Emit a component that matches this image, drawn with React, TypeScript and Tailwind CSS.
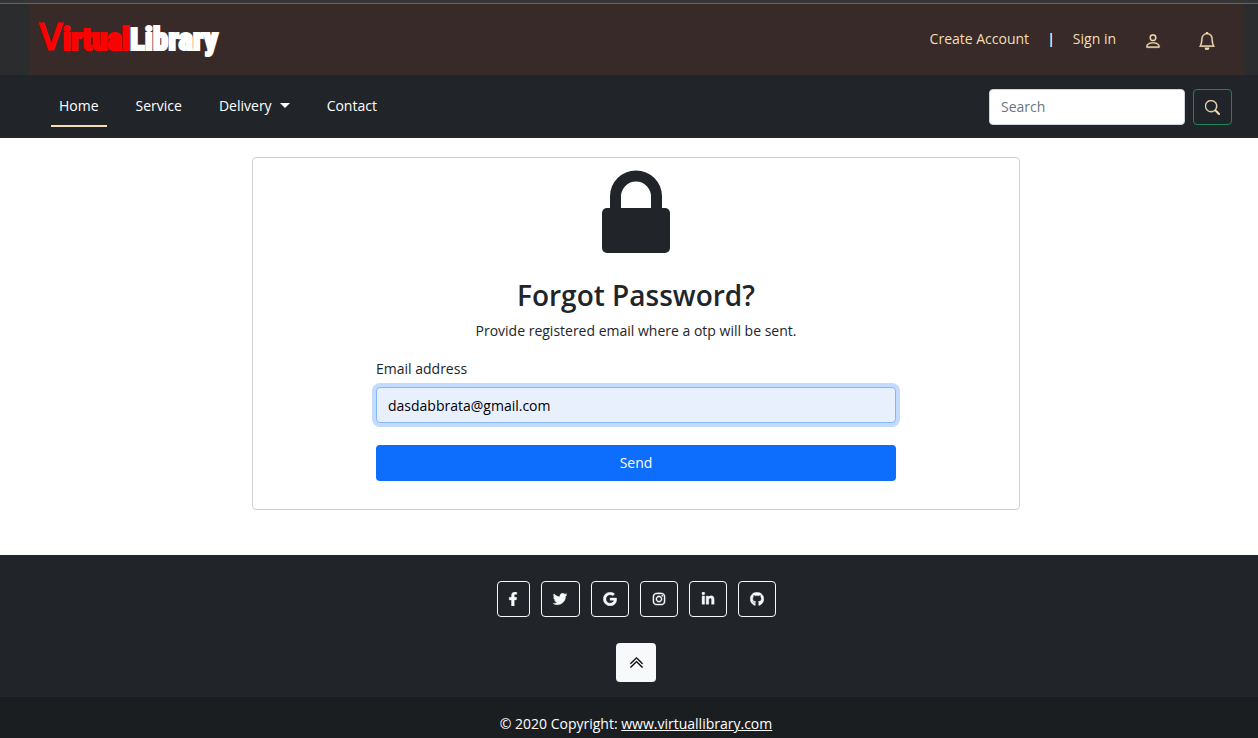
import { useState } from "react";
import type { ReactNode } from "react";
import { BsBell, BsChevronDoubleUp, BsPerson, BsSearch } from "react-icons/bs";
import { FaFacebookF, FaGithub, FaGoogle, FaInstagram, FaLinkedinIn, FaTwitter } from "react-icons/fa";

function TopBar() {
  return (
    <div className="border-t-[3px] border-[#353535]">
      <div className="border-t border-[#6a6764] bg-[#2a2c2d] pr-3.5 pl-[29px]">
        <div className="flex h-[71px] items-center justify-between bg-[#382a29] pr-7 pb-0.5 pl-2.5">
          <a href="#" className="flex items-baseline pb-0.5 font-['Roboto_Condensed',Roboto,sans-serif] text-[31px] leading-10 font-black">
            <span className="font-['Open_Sans',sans-serif] text-[38px] font-semibold text-[#ff0000] [-webkit-text-stroke:1px_#ff0000]">V</span>
            <span className="text-[#ff0000] [-webkit-text-stroke:2px_#ff0000]">irtual</span>
            <span className="text-white [-webkit-text-stroke:2px_#ffffff]">Library</span>
          </a>
          <div className="flex items-center text-[#f5deb3]">
            <a href="#create">Create Account</a>
            <span className="px-[18px] font-semibold text-white">|</span>
            <a href="#signin">Sign in</a>
            <a href="#profile" aria-label="Profile" className="mt-1 ml-7">
              <BsPerson className="size-[18px] stroke-[0.3]" />
            </a>
            <a href="#notifications" aria-label="Notifications" className="mt-1 ml-9">
              <BsBell className="size-[18px] stroke-[0.3]" />
            </a>
          </div>
        </div>
      </div>
    </div>
  );
}

function NavLink({ href, active, children }: { href: string; active?: boolean; children: ReactNode }) {
  return (
    <a
      href={href}
      className={
        active
          ? "flex h-10 items-center gap-2 border-b-2 border-[#f5deb3] px-2"
          : "flex h-10 items-center gap-2 border-b-2 border-transparent px-2"
      }
    >
      {children}
    </a>
  );
}

function NavBar() {
  return (
    <nav className="flex h-[63px] items-center justify-between bg-[#212529] pr-[26px] pl-[51px] text-white">
      <div className="flex gap-[21px]">
        <NavLink href="#home" active>Home</NavLink>
        <NavLink href="#service">Service</NavLink>
        <NavLink href="#delivery">
          Delivery
          <svg viewBox="0 0 10 5" className="h-[5px] w-2.5 fill-current" aria-hidden="true">
            <path d="M0 0h10L5 5z" />
          </svg>
        </NavLink>
        <NavLink href="#contact">Contact</NavLink>
      </div>
      <form className="flex gap-2" onSubmit={(e) => e.preventDefault()}>
        <input
          type="search"
          aria-label="Search"
          placeholder="Search"
          className="h-9 w-[196px] rounded border border-[#ced4da] bg-white px-[11px] text-[#212529] placeholder:text-[#6c757d]"
        />
        <button aria-label="Search" className="flex h-9 w-[39px] items-center justify-center rounded border border-[#198754] pt-0.5 text-[#f5deb3]">
          <BsSearch className="size-[15px] stroke-[0.4]" />
        </button>
      </form>
    </nav>
  );
}

function ForgotPassword() {
  const [email, setEmail] = useState("dasdabbrata@gmail.com");
  return (
    <main className="pt-[19px] pb-[45px] pl-3.5 text-[#212529]">
      <section className="mx-auto flex max-w-3xl flex-col items-center rounded border border-[#ced0d3] px-4 pt-3 pb-7">
        <svg viewBox="0 0 68 83" className="h-[83px] w-[68px]" aria-hidden="true">
          <rect y="38" width="68" height="45" rx="5" fill="#212529" />
          <path d="M13.500 40V26.500a20.500 20.500 0 0 1 41 0V40" fill="none" stroke="#212529" strokeWidth="11" />
        </svg>
        <h2 className="mt-6 text-[28px] leading-9 font-semibold">Forgot Password?</h2>
        <p className="mt-1.5 leading-6">Provide registered email where a otp will be sent.</p>
        <form className="mt-3.5 flex w-full max-w-[520px] flex-col" onSubmit={(e) => e.preventDefault()}>
          <label htmlFor="email" className="leading-6">Email address</label>
          <input
            id="email"
            type="email"
            value={email}
            onChange={(e) => setEmail(e.target.value)}
            className="mt-1.5 h-9 rounded border border-[#86b7fe] bg-[#e8f0fe] px-[11px] text-black ring-4 ring-[#c2dbfe] outline-none"
          />
          <button className="mt-[22px] h-9 rounded bg-[#0d6efd] text-white">Send</button>
        </form>
      </section>
    </main>
  );
}

const socials = [
  { label: "Facebook", Icon: FaFacebookF, width: "w-[33px]" },
  { label: "Twitter", Icon: FaTwitter, width: "w-[39px]" },
  { label: "Google", Icon: FaGoogle, width: "w-[38px]" },
  { label: "Instagram", Icon: FaInstagram, width: "w-[38px]" },
  { label: "LinkedIn", Icon: FaLinkedinIn, width: "w-[38px]" },
  { label: "GitHub", Icon: FaGithub, width: "w-[38px]" },
];

function Footer() {
  return (
    <footer className="bg-[#212529] pt-[26px] text-white">
      <div className="flex flex-col items-center pb-[15px] pl-3.5">
        <div className="flex gap-[11px]">
          {socials.map(({ label, Icon, width }) => (
            <a
              key={label}
              href="#social"
              aria-label={label}
              className={`flex h-9 items-center justify-center rounded border border-[#f8f9fa] text-[#f8f9fa] ${width}`}
            >
              <Icon className="size-3.5 stroke-current stroke-[14]" />
            </a>
          ))}
        </div>
        <button aria-label="Back to top" className="mt-[26px] flex h-[39px] w-10 items-center justify-center rounded bg-[#f8f9fa] text-black">
          <BsChevronDoubleUp className="size-[15px] stroke-[0.5]" />
        </button>
      </div>
      <div className="bg-[#1a1e21] pt-[15px] pl-3.5 text-center">
        <p className="h-[26px] leading-6">
          © 2020 Copyright:{" "}
          <a href="#site" className="underline">www.virtuallibrary.com</a>
        </p>
      </div>
    </footer>
  );
}

export default function App() {
  return (
    <div className="bg-white font-['Open_Sans','Noto_Sans',sans-serif] text-sm">
      <header>
        <TopBar />
        <NavBar />
      </header>
      <ForgotPassword />
      <Footer />
    </div>
  );
}
